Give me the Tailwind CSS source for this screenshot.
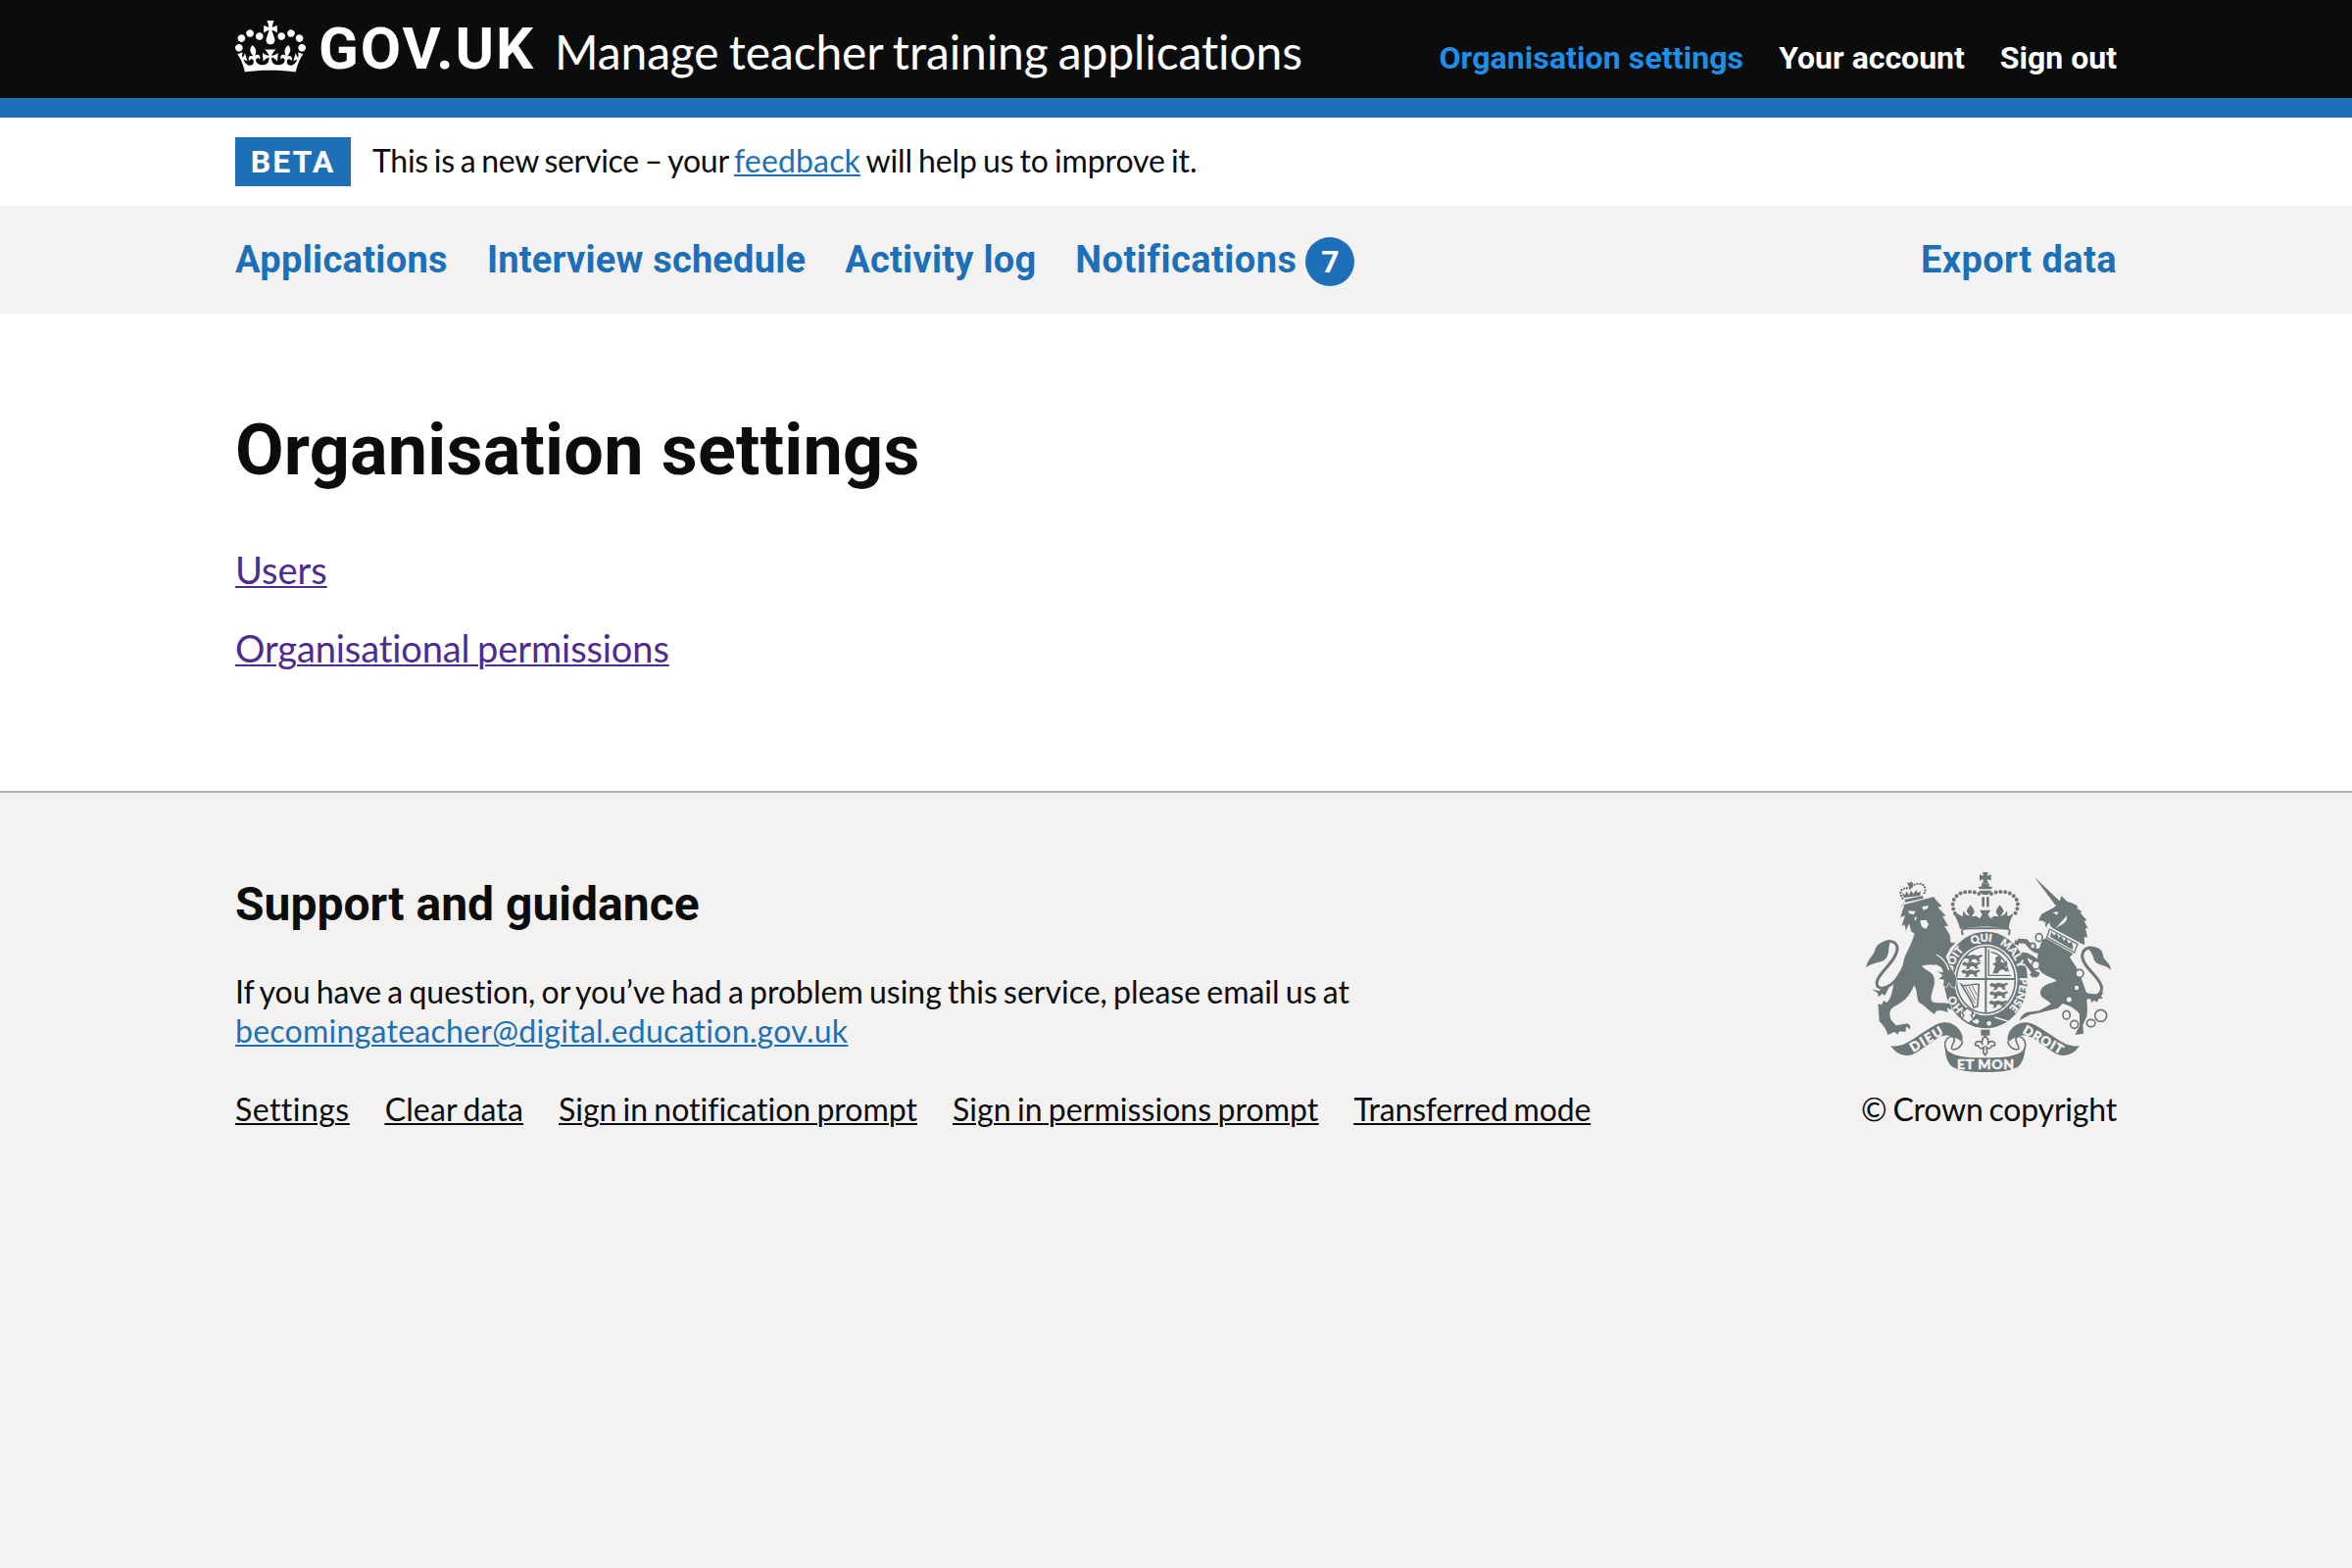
<!DOCTYPE html>
<html lang="en">
<head>
<meta charset="utf-8">
<title>Organisation settings - Manage teacher training applications</title>
<script src="https://cdn.jsdelivr.net/npm/@tailwindcss/browser@4"></script>
</head>
<body class="bg-[#f3f2f1] text-[#0b0c0c] font-['Lato',sans-serif] text-[32px] leading-[40px] [font-variant-ligatures:none] min-h-screen">

<header class="bg-[#0b0c0c] h-[120px] border-b-[20px] border-[#1d70b8] text-white">
  <div class="w-[1920px] mx-auto flex justify-between">
    <div class="flex">
      <svg class="w-[72px] h-[53px] mt-[21px]" viewBox="0 0 132 97" fill="currentColor" aria-hidden="true"><path fill-rule="evenodd" d="M25 30.2c3.5 1.5 7.7-.2 9.1-3.7 1.5-3.6-.2-7.8-3.9-9.2-3.6-1.4-7.6.3-9.1 3.9-1.4 3.5.3 7.5 3.9 9zM9 39.5c3.6 1.5 7.8-.2 9.2-3.7 1.5-3.6-.2-7.8-3.9-9.1-3.6-1.5-7.6.2-9.1 3.8-1.4 3.5.3 7.5 3.8 9zM4.4 57.2c3.5 1.5 7.7-.2 9.1-3.8 1.5-3.6-.2-7.7-3.9-9.1-3.5-1.5-7.6.3-9.1 3.8-1.4 3.5.3 7.6 3.9 9.1zm38.3-21.4c3.5 1.5 7.7-.2 9.1-3.8 1.5-3.6-.2-7.7-3.9-9.1-3.6-1.5-7.6.3-9.1 3.8-1.3 3.6.4 7.7 3.9 9.1zm64.4-5.6c-3.6 1.5-7.8-.2-9.1-3.7-1.5-3.6.2-7.8 3.8-9.2 3.6-1.4 7.7.3 9.2 3.9 1.3 3.5-.4 7.5-3.9 9zm15.9 9.3c-3.6 1.5-7.7-.2-9.1-3.7-1.5-3.6.2-7.8 3.7-9.1 3.6-1.5 7.7.2 9.2 3.8 1.5 3.5-.3 7.5-3.8 9zm4.7 17.7c-3.6 1.5-7.8-.2-9.2-3.8-1.5-3.6.2-7.7 3.9-9.1 3.6-1.5 7.7.3 9.2 3.8 1.3 3.5-.4 7.6-3.9 9.1zM89.3 35.8c-3.6 1.5-7.8-.2-9.2-3.8-1.4-3.6.2-7.7 3.9-9.1 3.6-1.5 7.7.3 9.2 3.8 1.4 3.6-.3 7.7-3.9 9.1zM69.7 17.7l8.9 4.7V9.3l-8.9 2.8c-.2-.3-.5-.6-.9-.9L72.4 0H59.6l3.5 11.2c-.3.3-.6.5-.9.9l-8.8-2.8v13.1l8.8-4.7c.3.3.6.7.9.9l-5 15.4v.1c-.2.8-.4 1.6-.4 2.4 0 4.1 3.1 7.5 7 8.1h.2c.3 0 .7.1 1 .1.4 0 .7 0 1-.1h.2c4-.6 7.1-4.1 7.1-8.1 0-.8-.1-1.7-.4-2.4V34l-5.1-15.4c.4-.2.7-.6 1-.9zM66 92.8c16.9 0 32.8 1.1 47.1 3.2 4-16.9 8.9-26.7 14-33.5l-9.6-3.4c1 4.9 1.1 7.2 0 10.2-1.5-1.4-3-4.3-4.2-8.7L108.6 76c2.8-2 5-3.2 7.5-3.3-4.4 9.4-10 11.9-13.6 11.2-4.3-.8-6.3-4.6-5.6-7.9 1-4.7 5.7-5.9 8-.5 4.3-8.7-3-11.4-7.6-8.8 7.1-7.2 7.9-13.5 2.1-21.1-8 6.1-8.1 12.3-4.5 20.8-4.7-5.4-12.1-2.5-9.5 6.2 3.4-5.2 7.9-2 7.2 3.1-.6 4.3-6.4 7.8-13.5 7.2-10.3-.9-10.9-8-11.2-13.8 2.5-.5 7.1 1.8 11 7.3L80.2 60c-4.1 4.4-8 5.3-12.3 5.4 1.4-4.4 8-11.6 8-11.6H55.5s6.4 7.2 7.9 11.6c-4.2-.1-8-1-12.3-5.4l1.4 16.4c3.9-5.5 8.5-7.7 10.9-7.3-.3 5.8-.9 12.8-11.1 13.8-7.2.6-12.9-2.9-13.5-7.2-.7-5 3.8-8.3 7.1-3.1 2.7-8.7-4.6-11.6-9.4-6.2 3.7-8.5 3.6-14.7-4.6-20.8-5.8 7.6-5 13.9 2.2 21.1-4.7-2.6-11.9.1-7.7 8.8 2.3-5.5 7.1-4.2 8.1.5.7 3.3-1.3 7.1-5.7 7.9-3.5.7-9-1.8-13.5-11.2 2.5.1 4.7 1.3 7.5 3.3l-4.7-15.4c-1.2 4.4-2.7 7.2-4.3 8.7-1.1-3-.9-5.3 0-10.2l-9.5 3.4c5 6.9 9.9 16.7 14 33.5 14.8-2.1 30.8-3.2 47.7-3.2z"/></svg>
      <a class="w-[241px] ml-[13px] mt-[20px] font-['Roboto',sans-serif] font-bold text-[60px] leading-[60px] tracking-[1.9px] whitespace-nowrap">GOV.UK</a>
      <a class="mt-[23px] text-[48px] leading-[60px] tracking-[-0.12px] [word-spacing:-2px] whitespace-nowrap">Manage teacher training applications</a>
    </div>
    <nav class="flex gap-[36px] mt-[39px] font-['Roboto',sans-serif] font-bold whitespace-nowrap">
      <a class="text-[#1d8feb] tracking-[0.1px]">Organisation settings</a>
      <a>Your account</a>
      <a>Sign out</a>
    </nav>
  </div>
</header>

<div class="bg-white h-[90px]">
  <div class="w-[1920px] mx-auto pt-[20px] flex items-start gap-[22px] whitespace-nowrap">
    <strong class="w-[118px] h-[50px] bg-[#1d70b8] text-white text-center font-['Roboto',sans-serif] font-bold leading-[50px] tracking-[2px]">BETA</strong>
    <p class="leading-[48px] tracking-[-0.28px] [word-spacing:-2px]">This is a new service – your <a class="text-[#1d70b8] underline decoration-2 underline-offset-2 tracking-[0.15px]">feedback</a><span class="tracking-[-0.1px]"> will help us to improve it.</span></p>
  </div>
</div>

<nav class="h-[110px] text-[#1d70b8] font-['Roboto',sans-serif] font-bold text-[38px]">
  <div class="w-[1920px] h-full mx-auto flex items-center gap-[40px] leading-[50px] whitespace-nowrap">
    <a class="tracking-[0.32px]">Applications</a>
    <a class="tracking-[0.2px]">Interview schedule</a>
    <a class="tracking-[0.25px]">Activity log</a>
    <a class="flex gap-[9px]"><span class="tracking-[0.45px]">Notifications</span><span class="w-[50px] h-[50px] mt-[2px] -mb-[2px] rounded-full bg-[#1d70b8] text-white text-[32px] text-center">7</span></a>
    <a class="ml-auto tracking-[0.4px]">Export data</a>
  </div>
</nav>

<main class="bg-white h-[487px]">
  <div class="w-[1920px] mx-auto pt-[100px]">
    <h1 class="font-['Roboto',sans-serif] font-bold text-[72px] leading-[80px] tracking-[0.2px]">Organisation settings</h1>
    <p class="mt-[56px] text-[38px] leading-[50px]"><a class="text-[#4c2c92] underline decoration-2 underline-offset-2">Users</a></p>
    <p class="mt-[30px] text-[38px] leading-[50px]"><a class="text-[#4c2c92] underline decoration-2 underline-offset-2 tracking-[-0.1px] [word-spacing:-2px]">Organisational permissions</a></p>
  </div>
</main>

<footer class="border-t-2 border-[#b1b4b6]">
  <div class="w-[1920px] mx-auto flex justify-between whitespace-nowrap">
    <div class="pt-[84px]">
      <h2 class="font-['Roboto',sans-serif] font-bold text-[48px] leading-[60px]">Support and guidance</h2>
      <p class="mt-[39px] [word-spacing:-2px]">If you have a question, or you’ve had a problem using this service, please email us at<br><a class="text-[#1d70b8] underline decoration-2 underline-offset-2 tracking-[0.26px]">becomingateacher@digital.education.gov.uk</a></p>
      <div class="mt-[40px] flex gap-[36px] [word-spacing:-2px] underline decoration-2 underline-offset-2">
        <a class="tracking-[0.45px]">Settings</a>
        <a class="tracking-[0.15px]">Clear data</a>
        <a>Sign in notification prompt</a>
        <a class="tracking-[0.06px]">Sign in permissions prompt</a>
        <a class="tracking-[-0.2px]">Transferred mode</a>
      </div>
    </div>
    <div class="pt-[81px] flex flex-col items-end">
      <svg class="w-[250px] h-[204px] mr-[6px] text-[#6c7779]" viewBox="42 30 750 612" fill="currentColor" aria-hidden="true">
        <defs>
          <path id="garter" d="M409 478A104 118 0 0 1 409 242A104 118 0 0 1 409 478"/>
          <path id="beast" d="M0 8l8-6 8 4 12-4 14 4 12-4 4 6-8 2-4 8 6 4-10 2-6-8-10 0-4 8-12 2 6-6-4-6-8 0z"/>
        </defs>
        <!-- St Edward's crown -->
        <path d="M399 30h17l-3 11 12-4v19l-12-5 3 12h-17l3-12-12 5V37l12 4zM396 64h23v10h10c0 5-3 8-7 8h-29c-4 0-6-3-7-8h10zM389 86h37c-2 8-9 14-18 14s-17-6-19-14zM397 106h8v30h-8zM411 106h8v30h-8z"/>
        <g fill="none" stroke="currentColor" stroke-width="12" stroke-linecap="round" stroke-dasharray="0 14.4">
          <path d="M388 96C364 86 334 87 317 105C305 120 305 138 316 158"/>
          <path d="M426 96C452 86 480 87 497 105C510 120 510 138 498 158"/>
        </g>
        <path d="M320 156l18 10 2-18 8 12 12 4-10-14c2-8 8-14 12-20 6 8 12 14 12 22l-8 14 14-2 10 8 8-12-8-14h34l-9 14 9 12 10-8 14 2-8-14c0-8 6-14 12-22 4 6 10 12 12 20l-10 14 12-4 8-12 2 18 18-10c-6 14-14 26-14 48-46-10-106-10-150 0-4-20-12-34-20-48z"/>
        <path d="M339 222c-12-26 10-20 70-20s82-6 70 20" fill="none" stroke="currentColor" stroke-width="6"/>
        <!-- Garter and shield -->
        <ellipse cx="409" cy="360" rx="128" ry="148"/>
        <ellipse cx="409" cy="360" rx="97" ry="109" fill="#f3f2f1"/>
        <ellipse cx="409" cy="360" rx="90" ry="102" fill="none" stroke="currentColor" stroke-width="5"/>
        <path d="M409 258v204M320 357h178" stroke="currentColor" stroke-width="6"/>
        <g>
          <use href="#beast" x="342" y="280"/><use href="#beast" x="336" y="302"/><use href="#beast" x="334" y="326"/>
          <use href="#beast" x="420" y="366"/><use href="#beast" x="420" y="392"/><use href="#beast" x="418" y="420"/>
        </g>
        <path d="M418 266v80h68M424 274c24 4 46 22 54 60" fill="none" stroke="currentColor" stroke-width="4"/>
        <path d="M430 340l8-22-8-8 10-4-2-14 10-6 10 8-4 10 12 4 6-8 4 10-8 10 10 8-6 8-10-8-10 2-6 10z"/>
        <path d="M334 374c16 10 34-6 54 0l-4 66-12 4c-8-28-24-44-38-70z" fill="none" stroke="currentColor" stroke-width="5"/>
        <path d="M346 380l30 52M357 380l22 42M368 378l13 28M340 382l32 58" stroke="currentColor" stroke-width="3"/>
        <g fill="#f3f2f1" stroke="#f3f2f1" stroke-width="1" font-family="Lato, sans-serif" font-weight="900" font-size="33">
          <text><textPath href="#garter" startOffset="76">HO</textPath></text>
          <text><textPath href="#garter" startOffset="200">SOIT</textPath></text>
          <text><textPath href="#garter" startOffset="305">QUI</textPath></text>
          <text><textPath href="#garter" startOffset="392">MAL</textPath></text>
          <text><textPath href="#garter" startOffset="466">Y</textPath></text>
          <text><textPath href="#garter" startOffset="516">PENSE</textPath></text>
        </g>
        <path d="M338 452c-6 14 0 30 14 36M376 464c-10 8-10 16-2 26" fill="none" stroke="#f3f2f1" stroke-width="6"/>
        <path d="M352 446l18 12-6 12 8 10-16 12-20-14 6-10-6-8z" fill="#f3f2f1" stroke="currentColor" stroke-width="4"/>
        <circle cx="381" cy="487" r="7" fill="#f3f2f1"/><circle cx="419" cy="493" r="7" fill="#f3f2f1"/>
        <path d="M436 474l40 12" stroke="#f3f2f1" stroke-width="4" fill="none"/>
        <!-- Lion -->
        <path d="M142 142l18-14 90-24 6 10 20 20-12 4 24 26-10 2 18 30-12 0 16 26 2 22 16 2-16 16-14 26 10 28c8 14 20 26 22 42l-4 26-12-2-8-14-6 14-12-4 2-18-16-2 12-12-18-14 20 4-6-14-14-8c-14 2-30-2-44 4 18 18 44 16 38 56-6 24-14 42-6 52 16 6 36 0 54 6 4 8 8 16 2 20l-10-6 2 14c-14-4-24-10-36-4l-6 10c-18-10-30-28-48-36-10-16-4-34-14-52-14 30-26 46-64 66-12 8-12 22-6 38l14 16 34-6c10 4 12 10 10 20l-12-8-2 16-20-2-4 10-12-8-20 10c-4-20-16-34-26-44l-4-54 12 2 6-12 10 6c14-14 16-36 20-58 6-24 26-40 30-64 0-18 22-46 34-88l-10-6-6-22-10 22-4-20-10 4 10-32-14 6 12-38 2-10z" stroke="#f3f2f1" stroke-width="2"/>
        <path d="M148 342C128 372 96 396 78 380C60 350 138 306 138 262C136 242 112 234 92 250" fill="none" stroke="currentColor" stroke-width="9"/>
        <path d="M116 244c-24-6-42 8-46 24-4 18-22 26-28 54 18-18 52-12 64-32 8-14 4-28 10-46zM60 388l22 6 14-14 20-4-16 32-8-6-12 10-2-12z"/>
        <path d="M172 148l22 2-6 10-14-4zM214 136l20-4-4 10-12 4zM208 178l18-2 8 14-8 14-12-6-4-10zM190 170l8-4-4 14z" fill="#f3f2f1"/>
        <path d="M258 282c18 10 32 28 38 48" stroke="#f3f2f1" stroke-width="4" fill="none"/>
        <path d="M160 114l56-12 2 8-56 12zM158 108l-6-16 10 8 4-12 8 12 6-14 8 10 8-12 4 10 10-6-2 14zM168 60l8 4 4-6 6 6-2 14-8 2-4-8z"/>
        <path d="M154 110C140 90 152 74 176 80C190 62 216 60 222 76C226 86 222 92 218 98" fill="none" stroke="currentColor" stroke-width="7" stroke-linecap="round" stroke-dasharray="0 9"/>
        <!-- Unicorn -->
        <path d="M557 44l80 76-14 12zM570 178c6-8 6-18 14-22l34-18 16-16 6-20 18 18c16 4 26 8 34 16l-6 2 18 14-6 2 20 24-8 2 12 22-8 0 6 28-10-2 2 24-8-2-92-50c-4-6-10-10-6-18l-10 10 0 8-6-8 4-10-8 4 2-6z"/>
        <path d="M616 154l14-2-4 8zM656 164c4 22-20 26-32 36" fill="#f3f2f1" stroke="#f3f2f1" stroke-width="2"/>
        <path d="M604 204l86 46-10 26-84-46z" fill="#f3f2f1" stroke="currentColor" stroke-width="4"/>
        <path d="M606 228l4-16 8 12 8-8 6 16 8-8 8 16 8-8 6 16 10-6 4 16-2 10z"/>
        <path d="M592 232l84 48-10 10 28 44 12 34 12 34 18 16-12 0-6 2 2 30-2 22-12 26 2 26-26 4 14-28 0-36c-16-20-34-26-52-32l-14 14-62 16-22 4-34 18c4-14 14-22 24-26l36-4 36-20c-4-14-34-14-32-38 4-22 26-24 50-34-16-12-52-16-58-46-4-24 2-50 14-78z"/>
        <path d="M586 262C576 276 560 272 550 262L532 242L506 240M584 314C562 308 552 284 524 282L534 306L566 350M506 240l-4 12M556 340l-8 8M550 336l22 8" fill="none" stroke="currentColor" stroke-width="14" stroke-linejoin="round"/>
        <path d="M704 392C730 424 764 408 764 384C760 350 704 322 704 284C708 260 730 256 748 268" fill="none" stroke="currentColor" stroke-width="9"/>
        <path d="M722 262c22-10 44 2 46 22 2 18 24 22 24 46-14-20-46-12-52-34-4-14-8-20-18-34zM716 400l34 4 20-8-8 14 6 6-14 2-4 10-10-6-8 8-2-12z"/>
        <g fill="#f3f2f1" stroke="currentColor" stroke-width="5">
          <ellipse cx="572" cy="230" rx="10" ry="12"/><ellipse cx="553" cy="256" rx="8" ry="9"/><ellipse cx="562" cy="314" rx="12" ry="13"/><circle cx="696" cy="340" r="12"/><circle cx="687" cy="384" r="9"/><circle cx="664" cy="420" r="10"/><ellipse cx="656" cy="467" rx="11" ry="13"/><circle cx="680" cy="496" r="12"/><ellipse cx="731" cy="492" rx="13" ry="11"/><circle cx="761" cy="469" r="18"/>
        </g>
        <!-- Motto ribbon -->
        <path d="M394 512h27v18h-27z"/>
        <path d="M407 530c-10 10-12 18-8 28-2-14-24-14-22 2l10 2c2 8 10 10 16 4l-2 16 6 8 6-8-2-16c6 6 14 4 16-4l10-2c2-16-20-16-22-2 4-10 2-18-8-28z" fill="#f3f2f1" stroke="currentColor" stroke-width="5"/>
        <path id="dieu" d="M118 562c22 32 56 38 84 16l56-38c24-16 50-14 78 10 10-20-14-60-52-60-24 0-46 18-84 42-26 18-48 34-82 30z"/>
        <use href="#dieu" transform="matrix(-1 0 0 1 814 0)"/>
        <g fill="none" stroke="currentColor" stroke-width="5">
          <path d="M338 548c-4 20-26 30-34 22 0-16 14-20 8-34-14-12-34 12-26 32 4 18 14 26 26 30"/>
          <path d="M476 548c4 20 26 30 34 22 0-16-14-20-8-34 14-12 34 12 26 32-4 18-14 26-26 30"/>
        </g>
        <path d="M284 566c16 26 56 32 123 32s107-6 123-32c-2 30-10 46-20 58-24 16-62 18-103 18s-79-2-103-18c-12-12-18-28-20-58z"/>
        <g fill="#f3f2f1" stroke="#f3f2f1" stroke-width="1.5" font-family="Lato, sans-serif" font-weight="900" font-size="42">
          <text x="321" y="633" textLength="174">ET MON</text>
          <text transform="translate(187 582) rotate(-31)" font-size="40" textLength="110">DIEU</text>
          <text transform="translate(520 521) rotate(30)" font-size="39" textLength="134">DROIT</text>
        </g>
      </svg>
      <p class="mt-[18px] tracking-[-0.2px] [word-spacing:-2px]">© Crown copyright</p>
    </div>
  </div>
</footer>

</body>
</html>
